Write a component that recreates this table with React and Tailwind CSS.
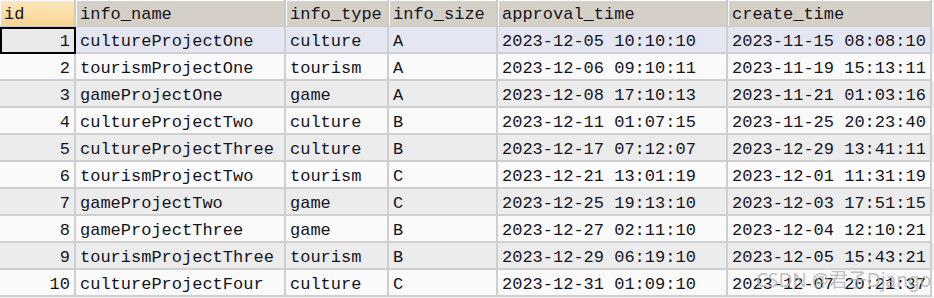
import React from "react";

const columns = [
  { key: "id", label: "id", width: "w-[76px]", align: "text-right" },
  { key: "name", label: "info_name", width: "w-[210px]" },
  { key: "type", label: "info_type", width: "w-[103px]" },
  { key: "size", label: "info_size", width: "w-[109px]" },
  { key: "approval", label: "approval_time", width: "w-[230px]" },
  { key: "create", label: "create_time", width: "w-[204px]" },
];

const rows = [
  [1, "cultureProjectOne", "culture", "A", "2023-12-05 10:10:10", "2023-11-15 08:08:10"],
  [2, "tourismProjectOne", "tourism", "A", "2023-12-06 09:10:11", "2023-11-19 15:13:11"],
  [3, "gameProjectOne", "game", "A", "2023-12-08 17:10:13", "2023-11-21 01:03:16"],
  [4, "cultureProjectTwo", "culture", "B", "2023-12-11 01:07:15", "2023-11-25 20:23:40"],
  [5, "cultureProjectThree", "culture", "B", "2023-12-17 07:12:07", "2023-12-29 13:41:11"],
  [6, "tourismProjectTwo", "tourism", "C", "2023-12-21 13:01:19", "2023-12-01 11:31:19"],
  [7, "gameProjectTwo", "game", "C", "2023-12-25 19:13:10", "2023-12-03 17:51:15"],
  [8, "gameProjectThree", "game", "B", "2023-12-27 02:11:10", "2023-12-04 12:10:21"],
  [9, "tourismProjectThree", "tourism", "B", "2023-12-29 06:19:10", "2023-12-05 15:43:21"],
  [10, "cultureProjectFour", "culture", "C", "2023-12-31 01:09:10", "2023-12-07 20:21:37"],
];

function HeaderCell({ col, first }) {
  const bg = first
    ? "bg-gradient-to-b from-[#fde8bf] to-[#f8d38f]"
    : "bg-[#d4d0c8]";
  return (
    <div
      className={`${col.width} h-[27px] shrink-0 flex items-center pl-[4px] pt-[2px] border-r-[2px] border-b-[1px] border-[#c9c9c9] ${bg} shadow-[inset_1px_1px_0_#ffffff]`}
    >
      {col.label}
    </div>
  );
}

function Row({ row, index }) {
  const selected = index === 0;
  const striped = index % 2 === 0;
  const rowBg = selected ? "bg-[#e4e7f1]" : striped ? "bg-[#ececec]" : "bg-[#fafafa]";
  return (
    <div className={`flex ${rowBg}`}>
      {row.map((value, i) => {
        const col = columns[i];
        const active = selected && i === 0;
        return (
          <div
            key={col.key}
            className={`${col.width} h-[27px] shrink-0 flex items-center pt-[3px] border-r-[2px] border-b-[2px] border-[#cfcfcf] ${
              i === 0 ? "justify-end pr-[4px]" : "pl-[4px]"
            } ${active ? "bg-[#e9e9e9] outline-[2px] outline-black -outline-offset-2" : ""}`}
          >
            {value}
          </div>
        );
      })}
    </div>
  );
}

export default function App() {
  return (
    <div
      className="relative w-[934px] h-[298px] overflow-hidden bg-[#f4f4f4] text-[17px] leading-none text-[#14141c]"
      style={{ fontFamily: '"Liberation Mono", "Courier New", monospace' }}
    >
      <div className="flex">
        {columns.map((col, i) => (
          <HeaderCell key={col.key} col={col} first={i === 0} />
        ))}
      </div>
      {rows.map((row, i) => (
        <Row key={row[0]} row={row} index={i} />
      ))}
      <span
        className="absolute left-[756px] top-[271px] text-[19px] text-[#b0b0b0]/80"
        style={{ fontFamily: '"Noto Sans", "Noto Sans CJK SC", sans-serif' }}
      >
        CSDN @君子Django
      </span>
    </div>
  );
}
